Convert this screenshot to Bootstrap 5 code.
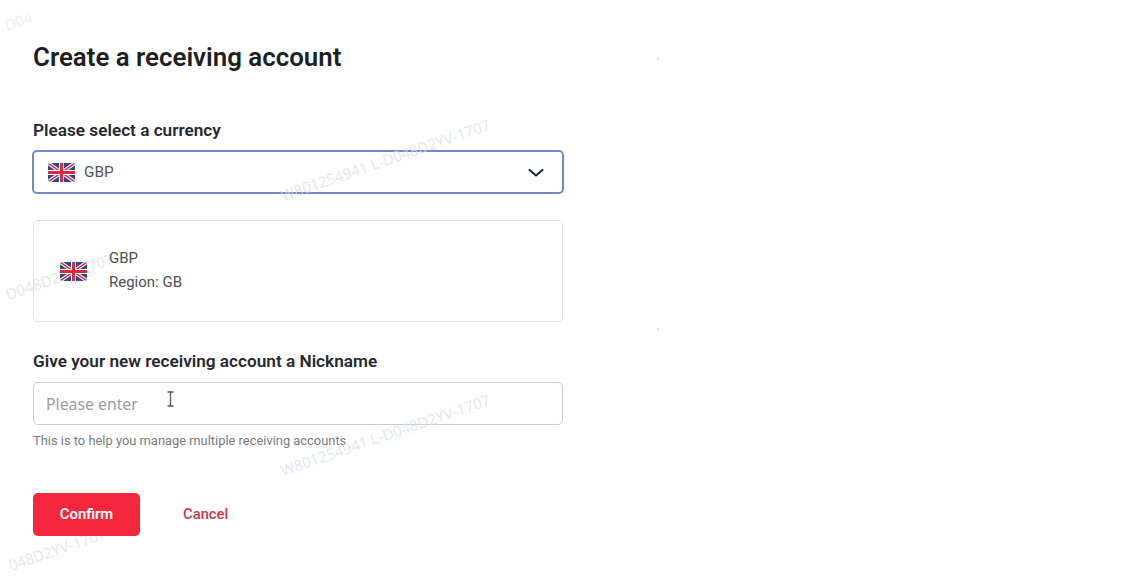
<!DOCTYPE html>
<html lang="en">
<head>
<meta charset="utf-8">
<title>Create a receiving account</title>
<link rel="stylesheet" href="https://cdn.jsdelivr.net/npm/bootstrap@5.3.0/dist/css/bootstrap.min.css">
<style>
html,body{height:586px;overflow:hidden}
body{font-family:Roboto,"Liberation Sans",sans-serif;color:#222;position:relative;background:#fff}
.pane{width:563px;padding:43px 0 0 33px}
.ttl{font-size:25.85px;font-weight:600;line-height:29px;color:#1d1f24;margin:0 0 48px 0}
.lbl{font-size:17.2px;font-weight:600;line-height:20px;color:#26282d;margin:0 0 10px 0}
.lbl-second{margin-top:29px;margin-bottom:11px}
.picker{height:44px;margin:0 -1px;border:2px solid #7488c4;border-radius:5px;padding:1px 17px 0 14px;color:#55585e;font-size:15.4px}
.picker svg.chev{width:18px;height:10px}
.flag{width:27px;height:19px;border-radius:2px;flex:none}
.flag-gap{margin-right:9px}
.info{height:102px;margin-top:26px;border:1px solid #dfe1e5;border-radius:5px;padding:0 0 0 26px;font-size:15px;color:#4d5056;gap:22px}
.info p{margin:0;line-height:24px}
.info .stack{margin-top:-2px}
.nick.form-control{height:43px;border:1.5px solid #c5ccd4;border-radius:5px;padding:0 12px;font-family:"Noto Sans","Open Sans",sans-serif;font-size:15.8px;box-shadow:none}
.nick.form-control::placeholder{color:#9a9da1;opacity:1}
.hint{font-size:12.9px;line-height:16px;color:#787b80;margin:8px 0 0 0}
.acts{margin-top:44px;gap:43px;position:relative}
.btn.go{width:107px;height:43px;background:#f5273f;border:0;border-radius:5px;color:#fff;font-size:14.8px;font-weight:600;padding:0}
.stop{font-size:14.8px;font-weight:500;color:#c9374f;text-decoration:none}
.wm{position:absolute;font-family:"Open Sans",sans-serif;font-size:15px;color:#dcdee2;opacity:.75;white-space:nowrap;transform:rotate(-19deg);transform-origin:left bottom;pointer-events:none;line-height:18px}
.ibeam{position:absolute;left:166px;top:391px;width:9px;height:16px}
.speck{position:absolute;width:2px;height:3px;background:#e6e6e6}
.info>svg,.info>.stack{position:relative}
</style>
</head>
<body>
<svg width="0" height="0" class="position-absolute">
<defs>
<clipPath id="fc"><rect width="27" height="19" rx="2"/></clipPath>
<symbol id="uk" viewBox="0 0 27 19">
<g clip-path="url(#fc)">
<rect width="27" height="19" fill="#2b4a86"/>
<path d="M0 0L27 19M27 0L0 19" stroke="#fff" stroke-width="3.500"/>
<path d="M0 0L27 19M27 0L0 19" stroke="#d8334a" stroke-width="1.500"/>
<path d="M13.500 0V19M0 9.500H27" stroke="#fff" stroke-width="5"/>
<path d="M13.500 0V19M0 9.500H27" stroke="#e0293f" stroke-width="3"/>
</g>
</symbol>
</defs>
</svg>

<div class="wm" style="left:9px;top:285px">D048D2YV-1707</div>
<div class="wm" style="left:12px;top:556px">048D2YV-1707</div>

<main class="pane">
<h1 class="ttl">Create a receiving account</h1>

<p class="lbl">Please select a currency</p>
<div class="picker d-flex align-items-center">
<svg class="flag flag-gap"><use href="#uk"/></svg>
<span>GBP</span>
<svg class="chev ms-auto" viewBox="0 0 18 10"><path d="M2.500 2l6.500 5.500 6.500-5.500" fill="none" stroke="#22252b" stroke-width="2" stroke-linecap="round" stroke-linejoin="round"/></svg>
</div>

<div class="info d-flex align-items-center">
<svg class="flag"><use href="#uk"/></svg>
<div class="stack"><p>GBP</p><p>Region: GB</p></div>
</div>

<p class="lbl lbl-second">Give your new receiving account a Nickname</p>
<input class="form-control nick" type="text" placeholder="Please enter">
<p class="hint">This is to help you manage multiple receiving accounts</p>

<div class="acts d-flex align-items-center">
<button class="btn go" type="button">Confirm</button>
<a class="stop" href="#">Cancel</a>
</div>
</main>

<div class="wm" style="left:284px;top:186px">W801254941 L-D048D2YV-1707</div>
<div class="wm" style="left:284px;top:461px">W801254941 L-D048D2YV-1707</div>
<div class="wm" style="left:8px;top:16px;opacity:.5">D04</div>
<span class="speck" style="left:657px;top:57px"></span>
<span class="speck" style="left:657px;top:328px"></span>
<svg class="ibeam" viewBox="0 0 9 16"><path d="M1.500 1H7.500M4.500 1V15M1.500 15H7.500" fill="none" stroke="#555" stroke-width="1.300"/></svg>
<script src="https://cdn.jsdelivr.net/npm/bootstrap@5.3.0/dist/js/bootstrap.bundle.min.js"></script>
</body>
</html>
